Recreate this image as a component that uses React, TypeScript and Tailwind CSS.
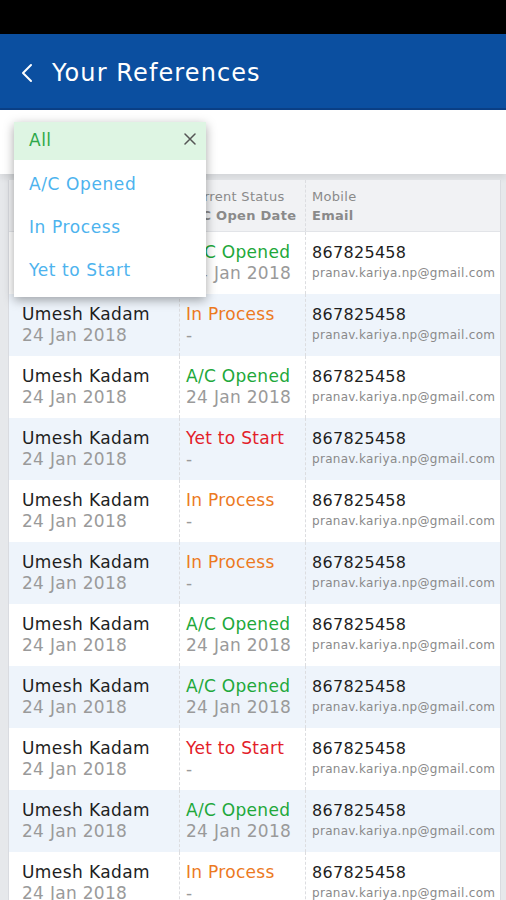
import React from "react";

type Status = "open" | "process" | "yet";
const rows: Status[] = ["open", "process", "open", "yet", "process", "process", "open", "open", "yet", "open", "process"];

const statusText: Record<Status, string> = { open: "A/C Opened", process: "In Process", yet: "Yet to Start" };
const statusColor: Record<Status, string> = { open: "text-[#21a83a]", process: "text-[#ec7a1f]", yet: "text-[#e3202a]" };

export default function App() {
  return (
    <div className="relative w-[506px] h-[900px] overflow-hidden bg-[#e6e8eb]" style={{ fontFamily: '"DejaVu Sans", sans-serif' }}>
      <div className="h-[34px] bg-black" />
      <div className="h-[76px] bg-[#0b4fa0] flex items-center pl-[20px] pt-[4px] border-b-2 border-[#0a3f85]">
        <svg width="14" height="22" viewBox="0 0 14 22" fill="none" className="mr-[18px]">
          <path d="M11 3 L3 11 L11 19" stroke="white" strokeWidth="2" strokeLinecap="round" strokeLinejoin="round" />
        </svg>
        <span className="text-white text-[24px] tracking-[1.1px]">Your References</span>
      </div>
      <div className="h-[64px] bg-white shadow-[0_4px_6px_rgba(0,0,0,0.08)]" />
      <div className="pl-[8px] pr-[5px] pt-[6px]">
        <div className="bg-white border-x border-[#d9dbe0]">
          <div className="flex h-[52px] bg-[#f1f2f4] text-[#8a8a8a] text-[13px] tracking-[0.3px] leading-[19px] border-b border-[#e2e4e8]">
            <div className="w-[170px] pl-[13px] flex flex-col justify-center">
              <span>Name</span>
              <span className="font-bold">Date</span>
            </div>
            <div className="w-[126px] pl-[6px] flex flex-col justify-center border-l border-dashed border-[#dcdde0] whitespace-nowrap">
              <span>Current Status</span>
              <span className="font-bold">A/C Open Date</span>
            </div>
            <div className="flex-1 pl-[6px] flex flex-col justify-center border-l border-dashed border-[#dcdde0]">
              <span>Mobile</span>
              <span className="font-bold">Email</span>
            </div>
          </div>
          {rows.map((s, i) => (
            <div key={i} className={`flex h-[62px] ${i % 2 === 1 ? "bg-[#eef4fb]" : "bg-white"}`}>
              <div className="w-[170px] pl-[13px] flex flex-col justify-center whitespace-nowrap">
                <span className="text-[17px] tracking-[0.4px] leading-[21px] text-[#1e1e1e]">Umesh Kadam</span>
                <span className="text-[17px] tracking-[0.3px] leading-[21px] text-[#9a9a9a]">24 Jan 2018</span>
              </div>
              <div className="w-[126px] pl-[6px] flex flex-col justify-center border-l border-dashed border-[#dcdde0] whitespace-nowrap">
                <span className={`text-[17px] tracking-[0.3px] leading-[21px] ${statusColor[s]}`}>{statusText[s]}</span>
                <span className="text-[17px] tracking-[0.3px] leading-[21px] text-[#9a9a9a]">{s === "open" ? "24 Jan 2018" : "-"}</span>
              </div>
              <div className="flex-1 pl-[6px] flex flex-col justify-center border-l border-dashed border-[#dcdde0] whitespace-nowrap overflow-hidden">
                <span className="text-[16px] tracking-[0.3px] leading-[21px] text-[#1e1e1e]">867825458</span>
                <span className="text-[12px] tracking-[0.3px] leading-[21px] text-[#8a8a8a]">pranav.kariya.np@gmail.com</span>
              </div>
            </div>
          ))}
        </div>
      </div>
      <div className="absolute left-[14px] top-[122px] w-[192px] h-[175px] bg-white shadow-[0_3px_10px_rgba(0,0,0,0.35)]">
        <div className="h-[38px] bg-[#def5e3] flex items-center justify-between pl-[15px] pr-[10px]">
          <span className="text-[#2ea84a] text-[17px] tracking-[0.5px]">All</span>
          <svg width="12" height="12" viewBox="0 0 12 12" className="-mt-[4px]">
            <path d="M1 1 L11 11 M11 1 L1 11" stroke="#555" strokeWidth="1.5" strokeLinecap="round" />
          </svg>
        </div>
        <div className="flex flex-col pl-[15px] text-[#4db3ee] text-[17px] tracking-[0.6px]">
          <span className="h-[43px] flex items-center mt-[3px]">A/C Opened</span>
          <span className="h-[43px] flex items-center">In Process</span>
          <span className="h-[43px] flex items-center">Yet to Start</span>
        </div>
      </div>
    </div>
  );
}
